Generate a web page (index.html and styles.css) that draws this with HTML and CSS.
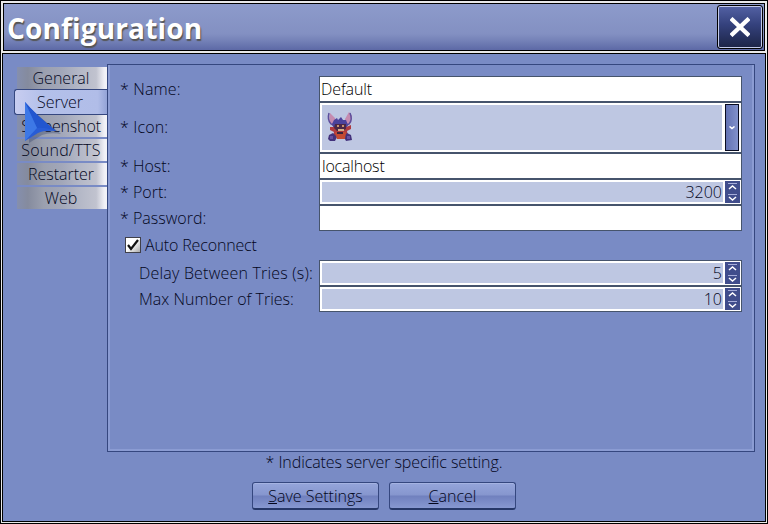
FILE: index.html
```html
<!DOCTYPE html>
<html lang="en">
<head>
<meta charset="utf-8">
<title>Configuration</title>
<link rel="stylesheet" href="styles.css">
</head>
<body>
<div class="window">
  <header class="titlebar">
    <h1>Configuration</h1>
    <button class="close" aria-label="Close"><svg width="20" height="20" viewBox="0 0 20 20"><path d="M1 1.500 19 18.500M19 1.500 1 18.500" stroke="#fff" stroke-width="4.300"/></svg></button>
  </header>
  <main class="client">
    <div class="content">
      <nav class="tabs">
        <a class="tab"><span class="t-general">General</span></a>
        <a class="tab active"><span class="t-server">Server</span></a>
        <a class="tab"><span class="t-screenshot">Screenshot</span></a>
        <a class="tab"><span class="t-sound">Sound/TTS</span></a>
        <a class="tab"><span class="t-restarter">Restarter</span></a>
        <a class="tab"><span class="t-web">Web</span></a>
        <svg class="cursor" width="42" height="50" viewBox="0 0 42 50"><path d="M7 14 39 40Q28 38 20 41L7 49Z" fill="#24365f" opacity=".3"/><path d="M3 8Q13 20 34 37Q22 36 16 39L3 47Z" fill="#285cd6"/><path d="M3 8Q13 20 34 37Q22 33 15 34Z" fill="#2256cf"/><path d="M3 8 15 34 3 47Z" fill="#3d78e6"/></svg>
      </nav>
      <section class="panel">
        <div class="row"><label class="l-name">* Name:</label><div class="field text"><span class="v-name">Default</span></div></div>
        <div class="row tall"><label class="l-icon">* Icon:</label><div class="field combo">
          <div class="fill"><svg class="avatar" width="28" height="30" viewBox="0 0 28 30">
            <path d="M4 1 9 6 10 12 7 14 3 9ZM23 0 26 4 25 11 19 13 19 7Z" fill="#c58bb0"/>
            <path d="M3 1Q1 8 5 12L9 14M24 1Q27 8 23 12L18 14" fill="none" stroke="#5c4e9c" stroke-width="1.500"/>
            <path d="M8 8 11 6 12 8 15 5 17 8 20 8 22 13 20 17 8 17 6 12Z" fill="#4b429c"/>
            <path d="M4 15 9 15 11 18 18 16 25 13 25 17 21 19 22 24 7 25 8 20 4 18Z" fill="#ae3b40"/>
            <path d="M9 12H20V17L16 19H11L8 16Z" fill="#4b2847"/>
            <path d="M11 13h2v2h-2zM16 13h2v2h-2z" fill="#c9926e"/><path d="M12 17h6v2h-6z" fill="#d4b087"/>
            <path d="M3 23 7 21 11 25 9 29H4L2 27ZM18 25 21 21 25 23 26 28 20 29Z" fill="#43327c"/>
            <path d="M9 20H20L19 27H11Z" fill="#c34b32"/><path d="M11 20h6v2h-6z" fill="#39223f"/>
            <path d="M4 24h3v3H4zM21 24h3v3h-3z" fill="#6652a1"/>
          </svg></div>
          <div class="drop"><svg width="6" height="4" viewBox="0 0 6 4"><path d="M.5.5 3 2.500 5.500.5" fill="none" stroke="#fff" stroke-width="1.500"/></svg></div>
        </div></div>
        <div class="row"><label class="l-host">* Host:</label><div class="field text"><span class="v-host">localhost</span></div></div>
        <div class="row"><label class="l-port">* Port:</label><div class="field spin"><div class="fill">3200</div><div class="steps"><i><svg viewBox="0 0 15 11"><path d="M3 2.500H12" stroke="#a5acd9"/><path d="M4 8 7.500 5 11 8" fill="none" stroke="#fff" stroke-width="1.500"/></svg></i><i><svg viewBox="0 0 15 11"><path d="M3 2.500H12" stroke="#a5acd9"/><path d="M4 5 7.500 8 11 5" fill="none" stroke="#fff" stroke-width="1.500"/></svg></i></div></div></div>
        <div class="row"><label class="l-password">* Password:</label><div class="field text"></div></div>
        <div class="check"><span class="box"><svg width="14" height="14" viewBox="0 0 14 14"><path d="M2 7 5 11 12 2" fill="none" stroke="#111" stroke-width="2.200"/></svg></span><label class="l-auto">Auto Reconnect</label></div>
        <div class="row sub"><label class="l-delay">Delay Between Tries (s):</label><div class="field spin"><div class="fill">5</div><div class="steps"><i><svg viewBox="0 0 15 11"><path d="M3 2.500H12" stroke="#a5acd9"/><path d="M4 8 7.500 5 11 8" fill="none" stroke="#fff" stroke-width="1.500"/></svg></i><i><svg viewBox="0 0 15 11"><path d="M3 2.500H12" stroke="#a5acd9"/><path d="M4 5 7.500 8 11 5" fill="none" stroke="#fff" stroke-width="1.500"/></svg></i></div></div></div>
        <div class="row sub"><label class="l-max">Max Number of Tries:</label><div class="field spin"><div class="fill">10</div><div class="steps"><i><svg viewBox="0 0 15 11"><path d="M3 2.500H12" stroke="#a5acd9"/><path d="M4 8 7.500 5 11 8" fill="none" stroke="#fff" stroke-width="1.500"/></svg></i><i><svg viewBox="0 0 15 11"><path d="M3 2.500H12" stroke="#a5acd9"/><path d="M4 5 7.500 8 11 5" fill="none" stroke="#fff" stroke-width="1.500"/></svg></i></div></div></div>
      </section>
    </div>
    <p class="note"><span>* Indicates server specific setting.</span></p>
    <footer class="actions"><button><span class="b-save"><u>S</u>ave Settings</span></button><button><span class="b-cancel"><u>C</u>ancel</span></button></footer>
  </main>
</div>
</body>
</html>
```

FILE: styles.css
```css
* { box-sizing: border-box; }
body { margin: 0; font: 300 16px/20px "Open Sans", "Noto Sans", sans-serif; color: #03061c; }
h1, p { margin: 0; }
label, span { white-space: nowrap; }
.window { width: 768px; height: 524px; border: 1px solid #000; background: #e9e9e9; display: flex; flex-direction: column; }
.titlebar { height: 48px; margin: 2px 2px 0; border: 1px solid #000; display: flex; align-items: center; justify-content: space-between; padding: 0 1px 0 3px; background: linear-gradient(#8d9bcb, #8390c2 65%, #7481b7 80%, #5d69a6); }
h1 { font: 700 28px/36px "Open Sans", sans-serif; color: #fff; text-shadow: 1px 2px 1px #555; letter-spacing: .15px; padding-top: 2px; }
.close { width: 46px; height: 44px; padding: 0; border: 1px solid #000; border-radius: 3px; box-shadow: inset 0 0 0 1px #c3cae8; background: linear-gradient(#5361a4, #34417c 45%, #1c2445); display: flex; align-items: center; justify-content: center; }
.client { flex: 1; margin: 2px 1px 1px; border: 1px solid #000; background: #798bc5; display: flex; flex-direction: column; }
.content { display: flex; height: 388px; margin: 10px 10px 0 11px; }
.tabs { position: relative; width: 93px; padding: 3px 0 0 3px; }
.tab { display: flex; align-items: center; justify-content: center; height: 22px; margin-bottom: 2px; padding-right: 2px; background: linear-gradient(90deg, #858fae 0, #858b9e 12%, #9ba0af 30%, #a2a7b9 50%, #b4b8c7 70%, #c1c3cf 88%, #f0f0f6 97%, #f4f4f8); }
.tab.active { height: 26px; margin: -2px 0 0 -3px; border: 1px solid #35477f; border-right: 0; border-radius: 3px 0 0 3px; background: linear-gradient(90deg, #c8cdf0, #b3c0ea 30%, #b1bde8 90%, #93a3d7); }
.t-screenshot { letter-spacing: -.15px; }
.t-sound { letter-spacing: .2px; }
.cursor { position: absolute; left: 8px; top: 30px; }
.panel { flex: 1; border: 1px solid #35477f; box-shadow: inset 2px 0 #8b9cd3, inset -2px -2px #8b9cd3; padding: 11px 12px 0; }
.row { display: flex; height: 26px; }
.row label { width: 199px; line-height: 26px; }
.row.tall { height: 51px; }
.row.tall label { line-height: 51px; }
.row.sub label { padding-left: 19px; }
.l-name, .l-icon { letter-spacing: .15px; }
.l-delay { letter-spacing: .2px; }
.l-max { letter-spacing: 0; }
.l-auto { letter-spacing: -.15px; }
.field { flex: 1; border: 1px solid #46546c; background: #fff; display: flex; padding: 2px; }
.field.text { padding: 1px; align-items: center; color: #000; }
.v-name { letter-spacing: -.1px; }
.v-host { padding-left: 1px; letter-spacing: -.2px; }
.fill { flex: 1; background: #bec7e2; text-align: right; line-height: 20px; padding-right: 1px; margin-right: 2px; }
.combo .fill { margin-right: 3px; text-align: left; }
.avatar { display: block; margin: 7px 0 0 4px; }
.drop { width: 14px; margin: -1px 0; border: 1px solid #080b20; background: linear-gradient(90deg, #6372b3, #8191cb); display: flex; align-items: center; justify-content: center; }
.spin { padding-right: 1px; }
.steps { width: 15px; display: flex; flex-direction: column; gap: 0; margin: -1px 0; }
.steps i { height: 11px; background: #404d8c; display: flex; }
.steps svg { width: 15px; height: 11px; }
.check { display: flex; height: 29px; align-items: center; padding: 0 0 1px 5px; gap: 4px; }
.box { width: 16px; height: 16px; border: 1px solid #40404a; background: linear-gradient(135deg, #fff 45%, #aaa); display: flex; }
.note { height: 20px; display: flex; justify-content: center; letter-spacing: -.08px; }
.actions { display: flex; justify-content: center; gap: 10px; margin-top: 10px; }
.actions button { width: 127px; height: 28px; padding: 0; border: 1px solid #35477f; border-radius: 3px; border-bottom: 2px solid #263768; background: linear-gradient(#95a5db, #8696ce 48%, #7080be 52%, #8798d1); box-shadow: inset 0 1px #a5b3e2; font: inherit; color: inherit; }
```
